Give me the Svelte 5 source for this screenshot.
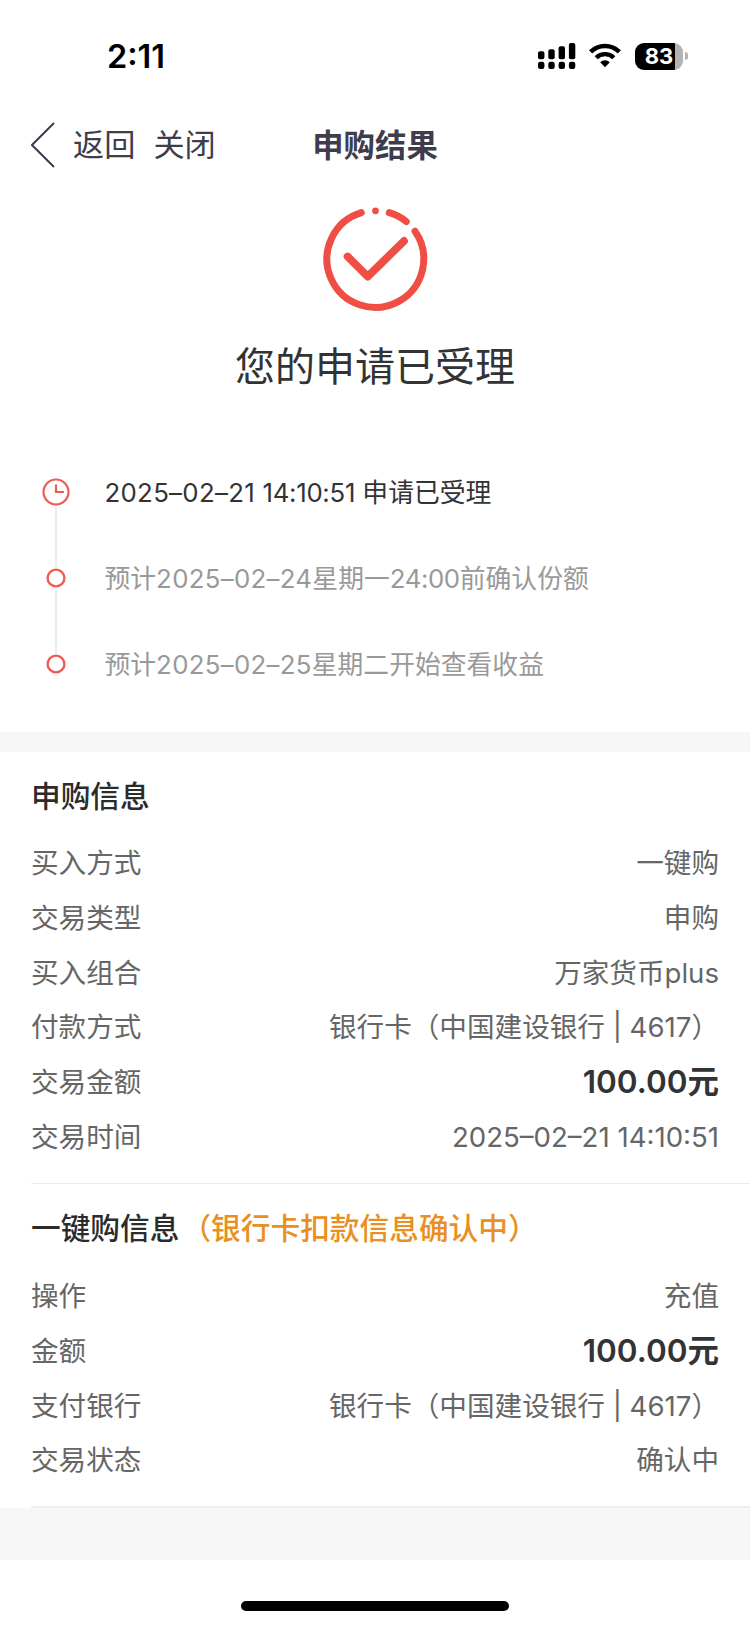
<script lang="ts">
	type Step = { parts: { text: string; kind?: 'date' | 'time' }[]; current: boolean };
	type Row = { label: string; value: string; kind?: 'amount' };

	const steps: Step[] = [
		{
			parts: [
				{ text: '2025–02–21 ', kind: 'date' },
				{ text: '14:10:51', kind: 'time' },
				{ text: ' 申请已受理' }
			],
			current: true
		},
		{
			parts: [
				{ text: '预计' },
				{ text: '2025–02–24', kind: 'date' },
				{ text: '星期一' },
				{ text: '24:00', kind: 'time' },
				{ text: '前确认份额' }
			],
			current: false
		},
		{
			parts: [
				{ text: '预计' },
				{ text: '2025–02–25', kind: 'date' },
				{ text: '星期二开始查看收益' }
			],
			current: false
		}
	];

	const orderRows: Row[] = [
		{ label: '买入方式', value: '一键购' },
		{ label: '交易类型', value: '申购' },
		{ label: '买入组合', value: '万家货币plus' },
		{ label: '付款方式', value: '银行卡（中国建设银行 | 4617）' },
		{ label: '交易金额', value: '100.00元', kind: 'amount' },
		{ label: '交易时间', value: '2025–02–21 14:10:51' }
	];

	const payRows: Row[] = [
		{ label: '操作', value: '充值' },
		{ label: '金额', value: '100.00元', kind: 'amount' },
		{ label: '支付银行', value: '银行卡（中国建设银行 | 4617）' },
		{ label: '交易状态', value: '确认中' }
	];

	// signal bars, from the shortest to the tallest
	const bars = [8, 10, 13, 16.3];
</script>

{#snippet rowList(rows: Row[])}
	<dl class="rows">
		{#each rows as row}
			<div class="row">
				<dt>{row.label}</dt>
				<dd class={row.kind ?? ''}>{row.value}</dd>
			</div>
		{/each}
	</dl>
{/snippet}

<div class="page">
	<div class="status-bar">
		<span class="clock">2:11</span>
		<div class="indicators">
			<svg class="signal" width="38" height="28" viewBox="0 0 38 28">
				{#each bars as h, i}
					<rect x={i * 10.3} y={17.3 - h} width="6.4" height={h} rx="2" />
					<rect x={i * 10.3} y="19.8" width="6.4" height="7.2" rx="2.2" />
				{/each}
			</svg>
			<svg class="wifi" width="32" height="28" viewBox="0 0 32 28" fill="none" stroke="#000">
				<path d="M1.6 9.8a20.6 20.6 0 0 1 28.8 0" stroke-width="4.6" />
				<path d="M7.2 15.7a12.6 12.6 0 0 1 17.6 0" stroke-width="4.4" />
				<path d="M11.2 20.3a6.8 6.8 0 0 1 9.6 0L16 25.3z" fill="#000" stroke="none" />
			</svg>
			<div class="battery"><span>83</span></div>
			<i class="nub"></i>
		</div>
	</div>

	<header class="nav">
		<svg width="24" height="46" viewBox="0 0 24 46" fill="none" stroke="#3f3c4c" stroke-width="2">
			<path d="M23 1 1 23l22 22" />
		</svg>
		<span class="back">返回</span>
		<span class="close">关闭</span>
		<h1>申购结果</h1>
	</header>

	<section class="result">
		<svg
			width="110"
			height="110"
			viewBox="0 0 110 110"
			fill="none"
			stroke="#f04e45"
			stroke-width="7"
			stroke-linecap="round"
			stroke-linejoin="round"
		>
			<path d="M95 27.3A48.4 48.4 0 1 1 41.3 8.7" />
			<path d="M69.3 8.7A48.4 48.4 0 0 1 86.3 17.6" />
			<circle cx="55.5" cy="6.8" r="3.4" fill="#f04e45" stroke="none" />
			<path d="M27.6 52.6 47.7 72.6 84 37" stroke-width="7.8" />
		</svg>
		<p>您的申请已受理</p>
	</section>

	<ol class="timeline">
		{#each steps as step}
			<li class:current={step.current}>
				<span class="marker">
					{#if step.current}
						<svg width="28" height="28" viewBox="0 0 28 28" fill="none" stroke="#ee5a54" stroke-width="2.2">
							<circle cx="14" cy="14" r="12.5" />
							<path d="M14 6.5V14h8" />
						</svg>
					{:else}
						<svg width="20" height="20" viewBox="0 0 20 20" fill="none" stroke="#ee5a54" stroke-width="2.4">
							<circle cx="10" cy="10" r="8.4" />
						</svg>
					{/if}
				</span>
				<span class="step-text">{#each step.parts as part}<span class={part.kind ?? ''}>{part.text}</span>{/each}</span>
			</li>
		{/each}
	</ol>

	<section class="card first">
		<h2>申购信息</h2>
		{@render rowList(orderRows)}
	</section>

	<section class="card second">
		<h2>一键购信息<em>（银行卡扣款信息确认中）</em></h2>
		{@render rowList(payRows)}
	</section>

	<div class="band"></div>
	<footer class="home"><i class="home-bar"></i></footer>
</div>

<style>
	:global(body) {
		background: #fff;
	}

	.page {
		width: 750px;
		height: 1626px;
		overflow: hidden;
		display: flex;
		flex-direction: column;
		background: #fff;
		font-family: Inter, 'Noto Sans CJK SC', sans-serif;
		color: #333;
	}

	.page * {
		box-sizing: border-box;
		margin: 0;
		padding: 0;
	}

	.page svg {
		flex: none;
		display: block;
	}

	.status-bar {
		height: 112px;
		flex: none;
		display: flex;
		justify-content: space-between;
		padding: 0 62px 0 107px;
		color: #000;
	}

	.clock {
		margin-top: 37px;
		line-height: 40px;
		font-size: 32.5px;
		font-weight: 600;
	}

	.indicators {
		display: flex;
		align-items: center;
		height: 28px;
		margin-top: 42px;
	}

	.page .wifi {
		margin-left: 13px;
	}

	.battery {
		width: 48px;
		height: 27px;
		margin-left: 14px;
		border-radius: 9px;
		background: linear-gradient(to right, #000 40px, #b3b3b3 40px);
		color: #fff;
		font-size: 22px;
		font-weight: 700;
		line-height: 27px;
		text-align: center;
	}

	.nub {
		width: 3px;
		height: 8px;
		margin-left: 2px;
		border-radius: 0 4px 4px 0;
		background: #b3b3b3;
	}

	.nav {
		position: relative;
		height: 66px;
		flex: none;
		display: flex;
		align-items: center;
		padding-left: 31px;
		color: #3f3c4c;
		font-size: 31.2px;
		line-height: 44px;
	}

	.back,
	.close {
		margin-left: 18px;
	}

	.nav h1 {
		position: absolute;
		left: 0;
		right: 0;
		padding-top: 1px;
		text-align: center;
		font-size: 31.4px;
		font-weight: 600;
		pointer-events: none;
	}

	.result {
		height: 272px;
		flex: none;
		display: flex;
		flex-direction: column;
		align-items: center;
		padding-top: 26px;
	}

	.result p {
		margin-top: 23px;
		font-size: 40px;
		line-height: 60px;
	}

	.timeline {
		height: 282px;
		flex: none;
		list-style: none;
	}

	.timeline li {
		position: relative;
		display: flex;
		align-items: center;
		height: 86px;
		color: #999;
		font-size: 25.8px;
	}

	.timeline li.current {
		color: #333;
	}

	/* connector to the next marker */
	.timeline li:not(:last-child)::after {
		content: '';
		position: absolute;
		left: 55px;
		top: 57px;
		width: 2px;
		height: 60px;
		background: #ececec;
	}

	.timeline li:nth-child(2)::after {
		top: 52px;
		height: 66px;
	}

	.marker {
		width: 28px;
		margin: 0 0 2px 42px;
		display: flex;
		justify-content: center;
	}

	.step-text {
		margin-left: 34.5px;
		line-height: 40px;
		white-space: pre;
	}

	.date {
		letter-spacing: 0.3px;
	}

	.time {
		letter-spacing: -0.4px;
	}

	.current .time {
		letter-spacing: -0.3px;
	}

	.card {
		flex: none;
	}

	.card.first {
		height: 451px;
		padding-left: 31px;
		border-top: 20px solid #f7f7f7;
	}

	.card.second {
		height: 325px;
		margin-left: 31px;
		border-bottom: 2px solid #efefef;
	}

	.card h2 {
		height: 83.8px;
		padding-top: 22px;
		line-height: 44px;
		font-size: 29.7px;
		font-weight: 500;
		color: #2b2b2b;
	}

	.card.second h2 {
		height: 86px;
		padding-top: 22px;
		border-top: 1px solid #ebebeb;
	}

	.card h2 em {
		margin-left: 2px;
		font-style: normal;
		color: #ea8f22;
	}

	.rows {
		display: flex;
		flex-direction: column;
	}

	.row {
		height: 54.7px;
		display: flex;
		align-items: center;
		justify-content: space-between;
		padding-right: 31px;
		color: #666;
		font-size: 27.6px;
		line-height: 40px;
		white-space: pre;
	}

	.amount {
		color: #333;
		font-size: 31.5px;
		font-weight: 600;
	}

	.band {
		height: 52px;
		flex: none;
		background: #f7f7f7;
	}

	.home {
		flex: 1;
		display: flex;
		justify-content: center;
		padding-top: 41px;
	}

	.home-bar {
		width: 268px;
		height: 10px;
		border-radius: 5px;
		background: #000;
	}
</style>
